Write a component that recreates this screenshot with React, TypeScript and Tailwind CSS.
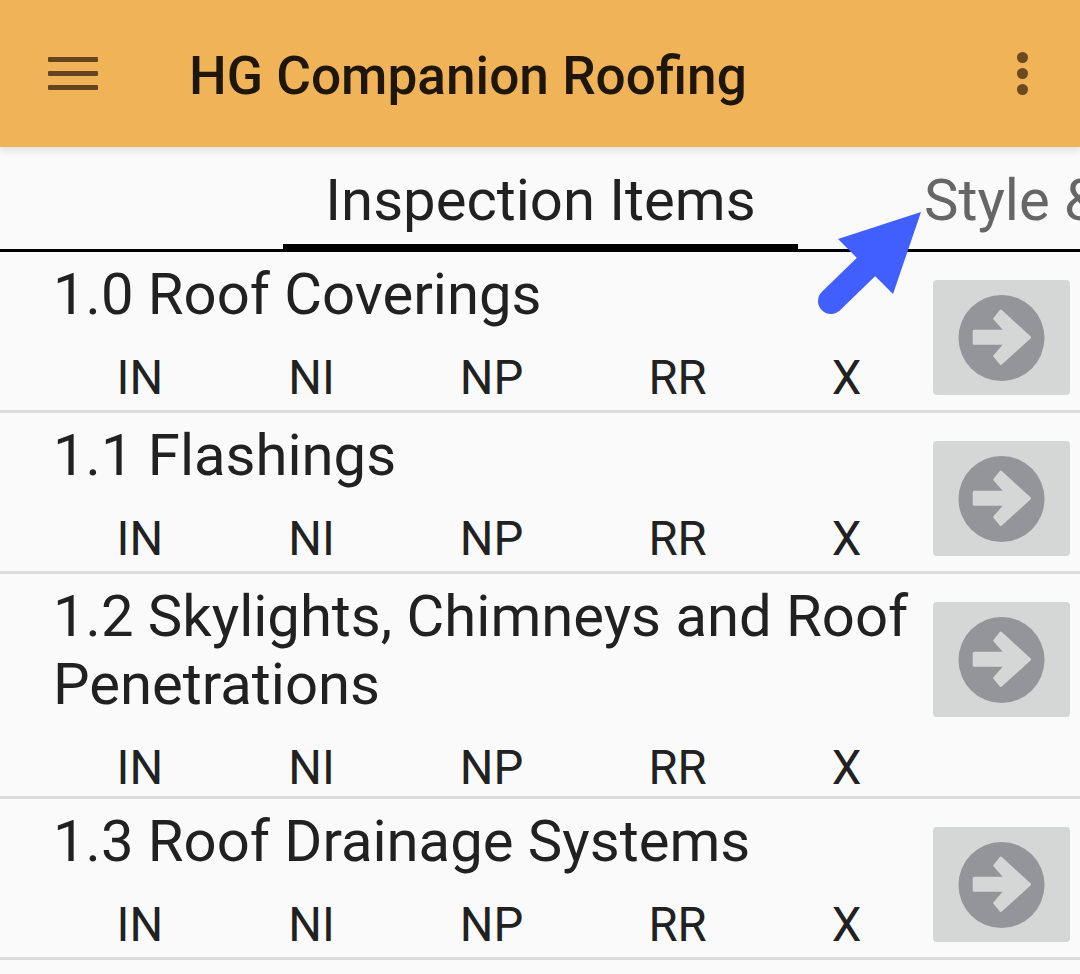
import React from "react";

const labels = ["IN", "NI", "NP", "RR", "X"];

function GoIcon() {
  return (
    <svg width="137" height="115" viewBox="0 0 137 115" className="block blur-[0.6px]">
      <circle cx="68.5" cy="58" r="43" fill="#94959a" />
      <polygon
        points="41.2,51.3 73,51.3 61.8,38.6 67.8,31.2 96.5,57.3 67.8,83.4 61.8,76 73,63.3 41.2,63.3"
        fill="#d5d6d6"
        stroke="#d5d6d6"
        strokeWidth="3"
        strokeLinejoin="round"
      />
    </svg>
  );
}

function Row({ title, height }: { title: React.ReactNode; height: string }) {
  return (
    <div className={`flex ${height} border-b-[3px] border-[#dcdcdc]`}>
      <div className="w-[924px] pl-[53px] pt-[8px] shrink-0">
        <div className="text-[58px] leading-[68px] text-[#212121]">{title}</div>
        <div className="flex justify-around ml-[1px] mt-[22px] h-[57px] items-center text-[47.25px] leading-[57px] text-[#212121]">
          {labels.map((l) => (
            <span key={l}>{l}</span>
          ))}
        </div>
      </div>
      <div className="ml-[9px] mt-[28px] w-[137px] h-[115px] rounded-[4px] bg-[#d5d6d6] shrink-0">
        <GoIcon />
      </div>
    </div>
  );
}

export default function App() {
  return (
    <div className="relative w-[1080px] h-[974px] overflow-hidden bg-[#fafafa] font-['Roboto',sans-serif]">
      <header className="relative z-10 h-[147px] bg-[#f1b358] flex items-center shadow-[0_3px_8px_rgba(0,0,0,0.12)]">
        <div className="ml-[48px] w-[50px] flex flex-col gap-[9px]">
          <div className="h-[5px] rounded-[1px] bg-[#64451f]" />
          <div className="h-[5px] rounded-[1px] bg-[#64451f]" />
          <div className="h-[5px] rounded-[1px] bg-[#64451f]" />
        </div>
        <h1 className="ml-[91px] text-[53.2px] leading-[64px] pt-[4px] font-medium text-[#1e1609] flex-1">HG Companion Roofing</h1>
        <div className="mr-[52px] flex flex-col gap-[5px]">
          <div className="w-[11px] h-[11px] rounded-full bg-[#6b4a20]" />
          <div className="w-[11px] h-[11px] rounded-full bg-[#6b4a20]" />
          <div className="w-[11px] h-[11px] rounded-full bg-[#6b4a20]" />
        </div>
      </header>

      <nav className="h-[105px] flex border-b-[3px] border-black overflow-hidden whitespace-nowrap">
        <div className="ml-[283px] w-[515px] h-[105px] shrink-0 border-b-[8px] border-black text-center text-[58px] leading-[106px] text-[#212121]">
          Inspection Items
        </div>
        <div className="pl-[126px] shrink-0 text-[58px] leading-[106px] text-[#666666]">Style &amp; Materials</div>
      </nav>

      <Row title="1.0 Roof Coverings" height="h-[161px]" />
      <Row title="1.1 Flashings" height="h-[161px]" />
      <Row
        title={
          <>
            1.2 Skylights, Chimneys and Roof
            <br />
            Penetrations
          </>
        }
        height="h-[225px]"
      />
      <Row title="1.3 Roof Drainage Systems" height="h-[161px]" />

      <svg className="absolute left-[818px] top-[210px] z-20" width="106" height="106" viewBox="818 210 106 106">
        <path d="M921 212 L838 239 L856 257 L865 268 L875 276 L893 294 Z" fill="#415fff" />
        <path d="M831 301 L866 267" stroke="#415fff" strokeWidth="26" strokeLinecap="round" fill="none" />
      </svg>
    </div>
  );
}
